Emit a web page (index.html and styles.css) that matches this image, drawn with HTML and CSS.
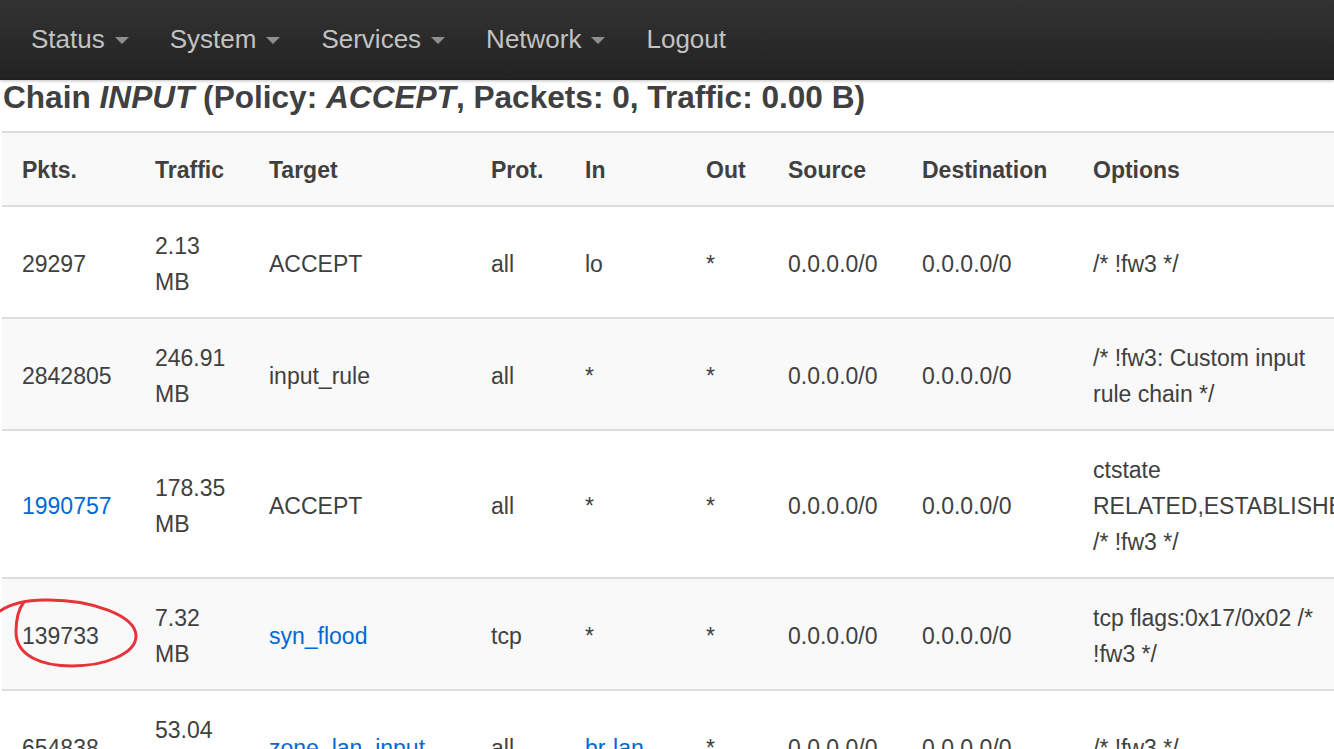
FILE: index.html
```html
<!DOCTYPE html>
<html>
<head>
<meta charset="utf-8">
<link rel="stylesheet" href="styles.css">
</head>
<body>
<header class="navbar">
  <ul class="nav">
    <li class="nav-item">Status<span class="caret"></span></li>
    <li class="nav-item">System<span class="caret"></span></li>
    <li class="nav-item">Services<span class="caret"></span></li>
    <li class="nav-item">Network<span class="caret"></span></li>
    <li class="nav-item">Logout</li>
  </ul>
</header>
<main class="content">
  <h2 class="chain-title">Chain <em>INPUT</em> (Policy: <em>ACCEPT</em>, Packets: 0, Traffic: 0.00 B)</h2>
  <table class="rules">
    <colgroup>
      <col class="c-pkts"><col class="c-traffic"><col class="c-target"><col class="c-prot"><col class="c-in"><col class="c-out"><col class="c-src"><col class="c-dst"><col class="c-opt">
    </colgroup>
    <thead>
      <tr>
        <th>Pkts.</th><th>Traffic</th><th>Target</th><th>Prot.</th><th>In</th><th>Out</th><th>Source</th><th>Destination</th><th>Options</th>
      </tr>
    </thead>
    <tbody>
      <tr>
        <td>29297</td><td>2.13<br>MB</td><td>ACCEPT</td><td>all</td><td>lo</td><td>*</td><td>0.0.0.0/0</td><td>0.0.0.0/0</td><td>/* !fw3 */</td>
      </tr>
      <tr class="odd">
        <td>2842805</td><td>246.91<br>MB</td><td>input_rule</td><td>all</td><td>*</td><td>*</td><td>0.0.0.0/0</td><td>0.0.0.0/0</td><td>/* !fw3: Custom input<br>rule chain */</td>
      </tr>
      <tr>
        <td><a href="#">1990757</a></td><td>178.35<br>MB</td><td>ACCEPT</td><td>all</td><td>*</td><td>*</td><td>0.0.0.0/0</td><td>0.0.0.0/0</td><td class="nowrap">ctstate<br>RELATED,ESTABLISHED<br>/* !fw3 */</td>
      </tr>
      <tr class="odd">
        <td class="marked">139733</td><td>7.32<br>MB</td><td><a href="#">syn_flood</a></td><td>tcp</td><td>*</td><td>*</td><td>0.0.0.0/0</td><td>0.0.0.0/0</td><td>tcp flags:0x17/0x02 /*<br>!fw3 */</td>
      </tr>
      <tr>
        <td>654838</td><td>53.04<br>MB</td><td><a href="#">zone_lan_input</a></td><td>all</td><td><a href="#">br-lan</a></td><td>*</td><td>0.0.0.0/0</td><td>0.0.0.0/0</td><td>/* !fw3 */</td>
      </tr>
    </tbody>
  </table>
</main>
<svg class="annotation" width="150" height="90" viewBox="0 0 150 90">
  <path d="M0,17 C12,9 26,6 44,6 C92,5 136,22 136,42 C136,60 104,72 72,72 C42,72 16,62 16,38 C16,22 20,13 24,8" fill="none" stroke="#e8333b" stroke-width="3" stroke-linecap="round"/>
</svg>
</body>
</html>
```
FILE: styles.css
```css
html, body {
  margin: 0;
  padding: 0;
  overflow: hidden;
  background: #fff;
}
body {
  font-family: "Liberation Sans", Arial, sans-serif;
  color: #404040;
  position: relative;
  width: 1334px;
  height: 749px;
}
.navbar {
  height: 80px;
  background: linear-gradient(to bottom, #333 0%, #222 100%);
  box-shadow: 0 1px 3px rgba(0,0,0,0.25), inset 0 -1px 0 rgba(0,0,0,0.1);
  position: relative;
  z-index: 1;
}
.nav {
  list-style: none;
  margin: 0;
  padding: 0 0 0 11px;
  display: flex;
  height: 80px;
  align-items: center;
}
.nav-item {
  font-size: 26px;
  color: #c2c2c2;
  padding: 0 21px 2px 20px;
  display: flex;
  align-items: center;
  line-height: 30px;
}
.caret {
  display: inline-block;
  width: 0;
  height: 0;
  margin-left: 10px;
  margin-top: 2px;
  border-left: 7px solid transparent;
  border-right: 7px solid transparent;
  border-top: 7px solid #8f8f8f;
}
.content {
  width: 1360px;
}
.chain-title {
  margin: 0;
  padding: 0 0 0 3px;
  height: 51px;
  font-size: 31.6px;
  line-height: 34px;
  font-weight: bold;
  color: #404040;
  white-space: nowrap;
}
.chain-title em {
  font-style: italic;
}
.rules {
  margin-left: 2px;
  width: 1358px;
  border-collapse: collapse;
  table-layout: fixed;
  font-size: 23px;
  line-height: 36px;
}
.c-pkts { width: 133px; }
.c-traffic { width: 114px; }
.c-target { width: 222px; }
.c-prot { width: 94px; }
.c-in { width: 121px; }
.c-out { width: 82px; }
.c-src { width: 134px; }
.c-dst { width: 171px; }
.c-opt { width: 287px; }
.rules th, .rules td {
  text-align: left;
  vertical-align: middle;
  padding: 19px 20px 17px;
  border-top: 2px solid #ddd;
  white-space: nowrap;
  overflow: visible;
}
.rules th {
  font-weight: bold;
  background: #f9f9f9;
}
.rules thead tr th {
  border-bottom: 2px solid #ddd;
}
.rules tbody td {
  padding: 21px 20px 17px;
}
.rules tr.odd td {
  background: #f9f9f9;
}
.rules a {
  color: #0069d6;
  text-decoration: none;
}
.annotation {
  position: absolute;
  left: 0;
  top: 594px;
  z-index: 2;
}
```
